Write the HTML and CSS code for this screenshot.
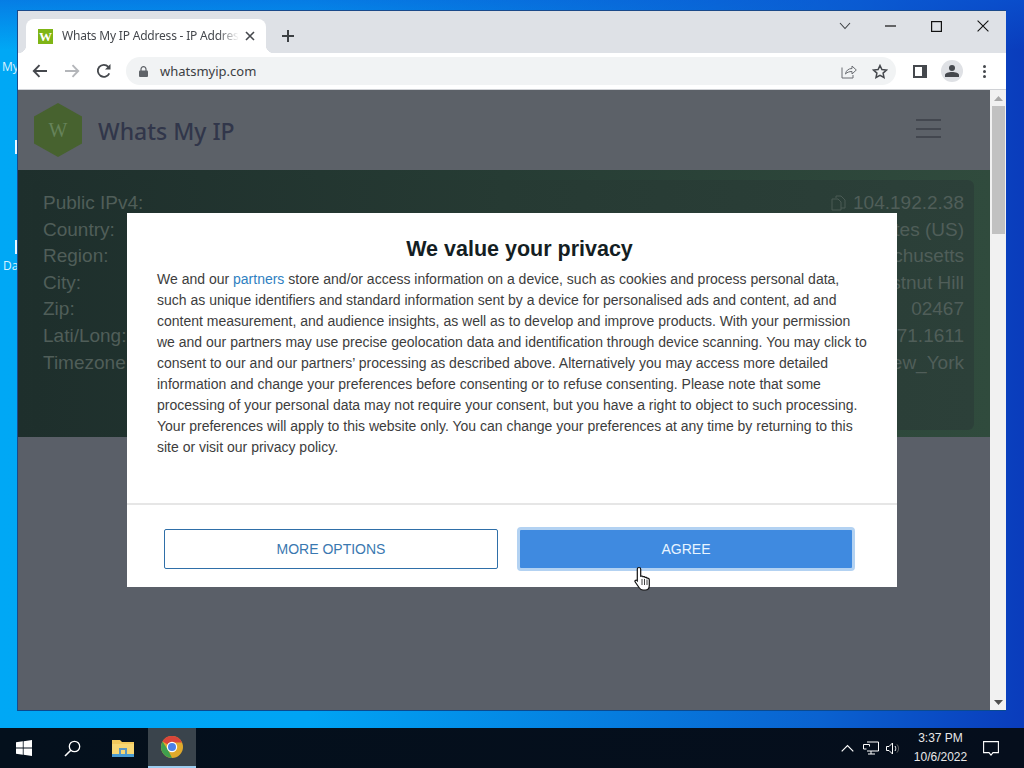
FILE: index.html
```html
<!DOCTYPE html>
<html lang="en">
<head>
<meta charset="utf-8">
<title>Whats My IP</title>
<link rel="stylesheet" href="styles.css">
</head>
<body>
<div class="screen">
  <main class="desktop">
    <span class="desk-label label-my">My</span>
    <span class="desk-tick tick-a"></span>
    <span class="desk-tick tick-b"></span>
    <span class="desk-label label-da">Da</span>

    <section class="window">
      <div class="tabstrip">
        <div class="tab">
          <span class="favicon">W</span>
          <span class="tab-title">Whats My IP Address - IP Addres</span>
          <svg class="tab-close" width="10" height="10" viewBox="0 0 10 10"><path d="M1 1l8 8M9 1l-8 8" stroke="#45484d" stroke-width="1.6" fill="none"/></svg>
        </div>
        <svg class="newtab" width="14" height="14" viewBox="0 0 14 14"><path d="M7 1v12M1 7h12" stroke="#3c4043" stroke-width="2" fill="none"/></svg>
        <div class="winctl">
          <svg class="ctl-chev" width="12" height="8" viewBox="0 0 12 8"><path d="M1 1l5 5.500L11 1" stroke="#3c4043" stroke-width="1.100" fill="none"/></svg>
          <svg class="ctl-min" width="11" height="2" viewBox="0 0 11 2"><path d="M0 1h11" stroke="#111" stroke-width="1.200"/></svg>
          <svg class="ctl-max" width="11" height="11" viewBox="0 0 11 11"><rect x=".6" y=".6" width="9.800" height="9.800" stroke="#111" stroke-width="1.200" fill="none"/></svg>
          <svg class="ctl-x" width="12" height="12" viewBox="0 0 12 12"><path d="M.6.600l10.800 10.800M11.400.600L.6 11.400" stroke="#111" stroke-width="1.100" fill="none"/></svg>
        </div>
      </div>

      <div class="toolbar">
        <svg class="nav nav-back" width="16" height="14" viewBox="0 0 16 14"><path d="M15 7H2M7.500 1.200L1.800 7l5.700 5.800" stroke="#45484d" stroke-width="1.900" fill="none"/></svg>
        <svg class="nav nav-fwd" width="16" height="14" viewBox="0 0 16 14"><path d="M1 7h13M8.500 1.200L14.200 7l-5.700 5.800" stroke="#b4b6ba" stroke-width="1.900" fill="none"/></svg>
        <svg class="nav nav-reload" width="16" height="16" viewBox="0 0 16 16"><path d="M13.300 10.300A6 6 0 1 1 12.300 3.800" stroke="#45484d" stroke-width="1.800" fill="none"/><path d="M14.500 1v5.500H9z" fill="#45484d"/></svg>
        <div class="omnibox">
          <svg class="lock" width="9" height="11" viewBox="0 0 9 11"><path d="M2 5V3.200a2.500 2.500 0 0 1 5 0V5" stroke="#5f6368" stroke-width="1.200" fill="none"/><rect y="4.500" width="9" height="6.500" rx="1" fill="#5f6368"/></svg>
          <span class="url">whatsmyip.com</span>
          <svg class="omni-share" width="16" height="15" viewBox="0 0 16 15"><path d="M1 3.500v10.500h11v-3M4.500 10c.5-3.500 3-5.500 6.500-5.500V2l4.300 4-4.300 4V7.500c-2.800 0-5 .8-6.500 2.500z" stroke="#6a6d72" stroke-width="1" fill="none"/></svg>
          <svg class="omni-star" width="16" height="15" viewBox="0 0 16 15"><path d="M8 1.500l1.900 4.100 4.500.5-3.300 3 .9 4.400L8 11.300l-4 2.200.9-4.400-3.300-3 4.500-.5z" stroke="#45484d" stroke-width="1.500" fill="none"/></svg>
        </div>
        <svg class="side-panel" width="14" height="13" viewBox="0 0 14 13"><path fill-rule="evenodd" d="M0 0h14v13H0zM2 2v9h7V2z" fill="#45484d"/></svg>
        <span class="avatar"><svg width="14" height="12" viewBox="0 0 14 12"><circle cx="7" cy="3" r="3" fill="#45484d"/><path d="M0 12V10c0-2 3.500-3 7-3s7 1 7 3v2z" fill="#45484d"/></svg></span>
        <span class="kebab"><i></i><i></i><i></i></span>
      </div>

      <div class="viewport">
        <div class="page">
          <header class="site-head">
            <div class="hex"><span>W</span></div>
            <span class="site-name">Whats My IP</span>
            <span class="burger"><i></i><i></i><i></i></span>
          </header>
          <section class="panel">
            <div class="panel-card">
              <div class="ip-row"><span>Public IPv4:</span><span class="val"><svg class="copy" width="15" height="16" viewBox="0 0 15 16"><path d="M5 3V1h5l4 4v8h-4M1 4h6l3 3v8H1z" stroke="#4a5a54" fill="none"/></svg>104.192.2.38</span></div>
              <div class="ip-row"><span>Country:</span><span class="val">United States (US)</span></div>
              <div class="ip-row"><span>Region:</span><span class="val">Massachusetts</span></div>
              <div class="ip-row"><span>City:</span><span class="val">Chestnut Hill</span></div>
              <div class="ip-row"><span>Zip:</span><span class="val">02467</span></div>
              <div class="ip-row"><span>Lati/Long:</span><span class="val">-71.1611</span></div>
              <div class="ip-row"><span>Timezone:</span><span class="val">New_York</span></div>
            </div>
          </section>
        </div>
        <div class="scrollbar">
          <svg width="9" height="5" viewBox="0 0 9 5"><path d="M4.500 0L9 5H0z" fill="#a8a8a8"/></svg>
          <div class="thumb"></div>
          <svg class="scroll-down" width="9" height="5" viewBox="0 0 9 5"><path d="M4.500 5L9 0H0z" fill="#505050"/></svg>
        </div>

        <div class="modal">
          <h1 class="modal-title">We value your privacy</h1>
          <p class="modal-text">We and our <a class="link">partners</a> store and/or access information on a device, such as cookies and process personal data,<br>such as unique identifiers and standard information sent by a device for personalised ads and content, ad and<br>content measurement, and audience insights, as well as to develop and improve products. With your permission<br>we and our partners may use precise geolocation data and identification through device scanning. You may click to<br>consent to our and our partners’ processing as described above. Alternatively you may access more detailed<br>information and change your preferences before consenting or to refuse consenting. Please note that some<br>processing of your personal data may not require your consent, but you have a right to object to such processing.<br>Your preferences will apply to this website only. You can change your preferences at any time by returning to this<br>site or visit our privacy policy.</p>
          <div class="modal-actions">
            <button class="btn btn-more">MORE OPTIONS</button>
            <button class="btn btn-agree">AGREE</button>
          </div>
        </div>
      </div>
    </section>

    <svg class="cursor" width="18" height="26" viewBox="0 0 18 26"><path d="M5 1.500c1 0 1.700.7 1.700 1.700v7l1-.2c.8 0 1.200.3 1.400.8.900-.4 1.700-.2 2 .6 1-.3 1.800 0 2 .8 1.300-.2 2.200.4 2.200 1.800v5.500c0 2.500-1.500 4.500-4 4.500H9c-2 0-3-1-4-2.500L1.200 16c-.8-1.200.6-2.500 1.800-1.500l.3.300V3.200c0-1 .7-1.700 1.700-1.700z" fill="#fff" stroke="#111" stroke-width="1.200"/><path d="M8 13v6M10.500 13v6M13 13.500V19" stroke="#111" stroke-width=".8"/></svg>
  </main>

  <footer class="taskbar">
    <div class="task-start">
      <svg width="16" height="16" viewBox="0 0 16 16"><path d="M0 2.300l6.800-1v6.300H0zM7.600 1.200L16 0v7.600H7.600zM0 8.400h6.800v6.300L0 13.700zM7.600 8.400H16V16l-8.400-1.200z" fill="#fff"/></svg>
    </div>
    <div class="task-btn">
      <svg width="17" height="17" viewBox="0 0 17 17"><circle cx="10.500" cy="6.500" r="5.200" stroke="#fff" stroke-width="1.300" fill="none"/><path d="M6.800 10.300L1 16" stroke="#fff" stroke-width="1.600"/></svg>
    </div>
    <div class="task-btn task-folder">
      <svg width="22" height="18" viewBox="0 0 22 18"><path d="M0 1h8l2 2h12v15H0z" fill="#f2c95c"/><path d="M0 5h22v13H0z" fill="#f7d774"/><path d="M0 15h22v3H0z" fill="#4a9bd0"/><path d="M7 9h8v6H7z" fill="#5a96c4"/><path d="M9 11h4v4H9z" fill="#f7d774"/></svg>
    </div>
    <div class="task-btn task-active">
      <svg width="22" height="22" viewBox="0 0 22 22"><circle cx="11" cy="11" r="11" fill="#e0a92c"/><path d="M11 11L1.500 5.500A11 11 0 0 1 21 6.500H11z" fill="#d9453a"/><path d="M11 22A11 11 0 0 1 1.500 5.500L7 14z" fill="#3f9f4e"/><circle cx="11" cy="11" r="5.200" fill="#fff"/><circle cx="11" cy="11" r="4" fill="#4a80e8"/></svg>
    </div>
    <div class="tray">
      <svg class="tray-chev" width="13" height="8" viewBox="0 0 13 8"><path d="M.7 7.300L6.500 1.500l5.800 5.800" stroke="#fff" stroke-width="1.200" fill="none"/></svg>
      <svg class="tray-net" width="16" height="14" viewBox="0 0 16 14"><path d="M4 1h11.500v9H4M.5 3.500h6v2M.5 3.500V8h3M8 10v3M5 13h7" stroke="#fff" fill="none"/></svg>
      <svg class="tray-vol" width="15" height="13" viewBox="0 0 15 13"><path d="M.5 4.500h2.500L6.500 1v11L3 8.500H.5zM9 4c1 1.500 1 3.500 0 5" stroke="#fff" fill="none"/><path d="M11 2.500c2 2.500 2 5.500 0 8" stroke="#777" fill="none"/></svg>
      <div class="clock"><span>3:37 PM</span><span>10/6/2022</span></div>
      <svg class="notify" width="16" height="15" viewBox="0 0 16 15"><path d="M.6.600h14.800v11H10l-2 2.500-2-2.500H.6z" stroke="#fff" stroke-width="1.100" fill="none"/></svg>
    </div>
  </footer>
</div>
</body>
</html>
```

FILE: styles.css
```css
* { box-sizing: border-box; }
html, body { margin: 0; padding: 0; }
body { width: 1024px; height: 768px; overflow: hidden; font-family: "Liberation Sans", Arial, sans-serif; }

.screen { display: flex; flex-direction: column; width: 1024px; height: 768px; }

.desktop {
  position: relative;
  height: 728px;
  background:
    linear-gradient(180deg, rgba(10, 90, 215, .55) 0, rgba(10, 90, 215, 0) 50px),
    linear-gradient(90deg, #00a8f5 0, #00a4f4 30%, #0a62d0 80%, #0a3cbc 100%);
}
.desk-label { position: absolute; left: 2px; color: #d8f2ff; font: 12px "Open Sans", sans-serif; }
.label-my { top: 58px; }
.label-da { top: 257px; left: 3px; }
.desk-tick { position: absolute; left: 15px; width: 2px; height: 14px; background: #e8f6ff; }
.tick-a { top: 140px; }
.tick-b { top: 240px; }

.window {
  position: absolute; left: 17px; top: 10px;
  width: 989px; height: 701px;
  display: flex; flex-direction: column;
  border: 1px solid #1a4a8a; border-right: 0; border-bottom-color: #0a4a90;
  background: #fff;
}

.tabstrip { height: 42px; flex: none; background: #dee1e6; display: flex; align-items: flex-end; padding-left: 8px; position: relative; }
.tab {
  width: 240px; height: 34px; background: #fff; border-radius: 8px 8px 0 0;
  display: flex; align-items: center; padding: 0 11px 0 12px; margin-right: 15px;
  position: relative;
}
.tab::before, .tab::after { content: ""; position: absolute; bottom: 0; width: 8px; height: 8px; }
.tab::before { left: -8px; background: radial-gradient(circle at 0 0, transparent 8px, #fff 8.5px); }
.tab::after { right: -8px; background: radial-gradient(circle at 100% 0, transparent 8px, #fff 8.5px); }
.favicon {
  width: 15px; height: 15px; flex: none; background: #7fb515; color: #fff;
  font: bold 13px/15px "Liberation Serif", serif; text-align: center; margin-right: 9px;
}
.tab-title {
  flex: 1; min-width: 0; white-space: nowrap; overflow: hidden; color: #45484d; font: 12px/16px "Noto Sans", sans-serif;
  letter-spacing: -.2px;
  -webkit-mask-image: linear-gradient(90deg, #000 88%, transparent 100%);
  mask-image: linear-gradient(90deg, #000 88%, transparent 100%);
}
.tab-close { flex: none; margin-left: 6px; }
.newtab { margin-bottom: 10px; }

.winctl { position: absolute; right: 0; top: 0; height: 30px; display: flex; align-items: center; }
.ctl-chev { margin-right: 34px; }
.ctl-min { margin-right: 35px; }
.ctl-max { margin-right: 35px; }
.ctl-x { margin-right: 17px; }

.toolbar { height: 37px; flex: none; background: #fff; display: flex; align-items: center; padding-left: 14px; border-bottom: 1px solid #d0d2d6; }
.nav { flex: none; }
.nav-back { margin-right: 16px; }
.nav-fwd { margin-right: 16px; }
.nav-reload { margin-right: 14px; }
.omnibox {
  width: 770px; height: 28px; border-radius: 14px; background: #f1f3f4; flex: none;
  display: flex; align-items: center; padding-left: 13px;
}
.lock { margin-right: 12px; flex: none; }
.url { flex: 1; font: 13px "Noto Sans", sans-serif; color: #3c4043; }
.omni-share { margin-right: 15px; }
.omni-star { margin-right: 8px; }
.side-panel { margin-left: 17px; flex: none; }
.avatar { width: 22px; height: 22px; flex: none; border-radius: 50%; background: #dfe1e5; display: flex; align-items: center; justify-content: center; margin-left: 14px; }
.kebab { display: flex; flex-direction: column; gap: 2px; margin-left: 20px; }
.kebab i { width: 3px; height: 3px; border-radius: 50%; background: #45484d; }

.viewport { position: relative; flex: 1; display: flex; min-height: 0; }
.page { flex: 1; background: #5a5f68; display: flex; flex-direction: column; }

.site-head { height: 80px; flex: none; background: #5c6168; display: flex; align-items: center; padding-left: 16px; position: relative; }
.hex {
  width: 48px; height: 54px; flex: none; background: #47622f;
  clip-path: polygon(50% 0, 100% 25%, 100% 75%, 50% 100%, 0 75%, 0 25%);
  display: flex; align-items: center; justify-content: center;
  color: #66835a; font: 20px "Liberation Serif", serif;
}
.site-name { margin: 2px 0 0 16px; font: 500 23px "Noto Sans", sans-serif; color: #31364a; }
.burger { position: absolute; right: 49px; top: 29px; display: flex; flex-direction: column; gap: 6.500px; }
.burger i { width: 25px; height: 2px; background: #43474f; }

.panel {
  height: 267px; flex: none; padding: 10px 16px 7px 15px;
  background: linear-gradient(90deg, #1e2f2c 0, #263c34 50%, #304b3d 100%);
}
.panel-card { height: 250px; border-radius: 6px; background: linear-gradient(90deg, #1e2f2c 0, #263a33 50%, #2c4039 100%); padding: 12px 10px 0 10px; }
.ip-row { display: flex; justify-content: space-between; align-items: flex-start; height: 26.600px; font-size: 19px; line-height: 22px; color: #505e59; }
.val { display: flex; align-items: center; height: 22px; }
.copy { margin-right: 7px; }

.scrollbar { width: 16px; flex: none; background: #f1f1f1; display: flex; flex-direction: column; align-items: center; padding-top: 6px; position: relative; }
.thumb { width: 13px; height: 128px; margin-top: 5px; background: #c1c1c1; }
.scroll-down { position: absolute; bottom: 5px; left: 4px; }

.modal {
  position: absolute; left: 109px; top: 123px; width: 770px; height: 374px;
  background: #fff; display: flex; flex-direction: column;
}
.modal-title { margin: 23px 0 0; padding-left: 15px; text-align: center; font-size: 21.500px; line-height: 26px; font-weight: bold; color: #141e23; }
.modal-text { margin: 7px 0 0; padding-left: 30px; white-space: nowrap; font-size: 14px; line-height: 21px; color: #3d3d3d; height: 208px; }
.link { color: #2f7fc1; }
.modal-actions { margin-top: 26px; border-top: 2px solid #e6e6e6; flex: 1; display: flex; align-items: center; padding: 5px 44px 0 37px; gap: 21px; }
.btn { flex: 1; height: 40px; border-radius: 2px; font: 14px "Liberation Sans", sans-serif; }
.btn-more { background: #fff; border: 1px solid #2f6fa8; color: #3a78b0; }
.btn-agree { background: #3f8ae0; border: 1px solid #3f8ae0; color: #e8f4ff; outline: 3px solid #b3d2f2; outline-offset: -1px; }

.cursor { position: absolute; left: 634px; top: 566px; }

.taskbar { height: 40px; flex: none; background: linear-gradient(90deg, #04101c 0, #050e1c 100%); display: flex; align-items: center; }
.task-start { width: 47px; height: 40px; display: flex; align-items: center; justify-content: center; }
.task-btn { width: 50px; height: 40px; display: flex; align-items: center; justify-content: center; }
.task-folder { width: 51px; }
.task-active { background: #3a444c; border-bottom: 2px solid #9ccdf0; width: 48px; }
.tray { margin-left: auto; display: flex; align-items: center; padding-right: 25px; color: #fff; }
.tray-net { margin-left: 9px; }
.tray-vol { margin-left: 7px; }
.clock { display: flex; flex-direction: column; align-items: center; font: 12px/19px "Liberation Sans", sans-serif; color: #e8e8e8; margin: 0 16px 0 13px; width: 53px; white-space: nowrap; }
```
